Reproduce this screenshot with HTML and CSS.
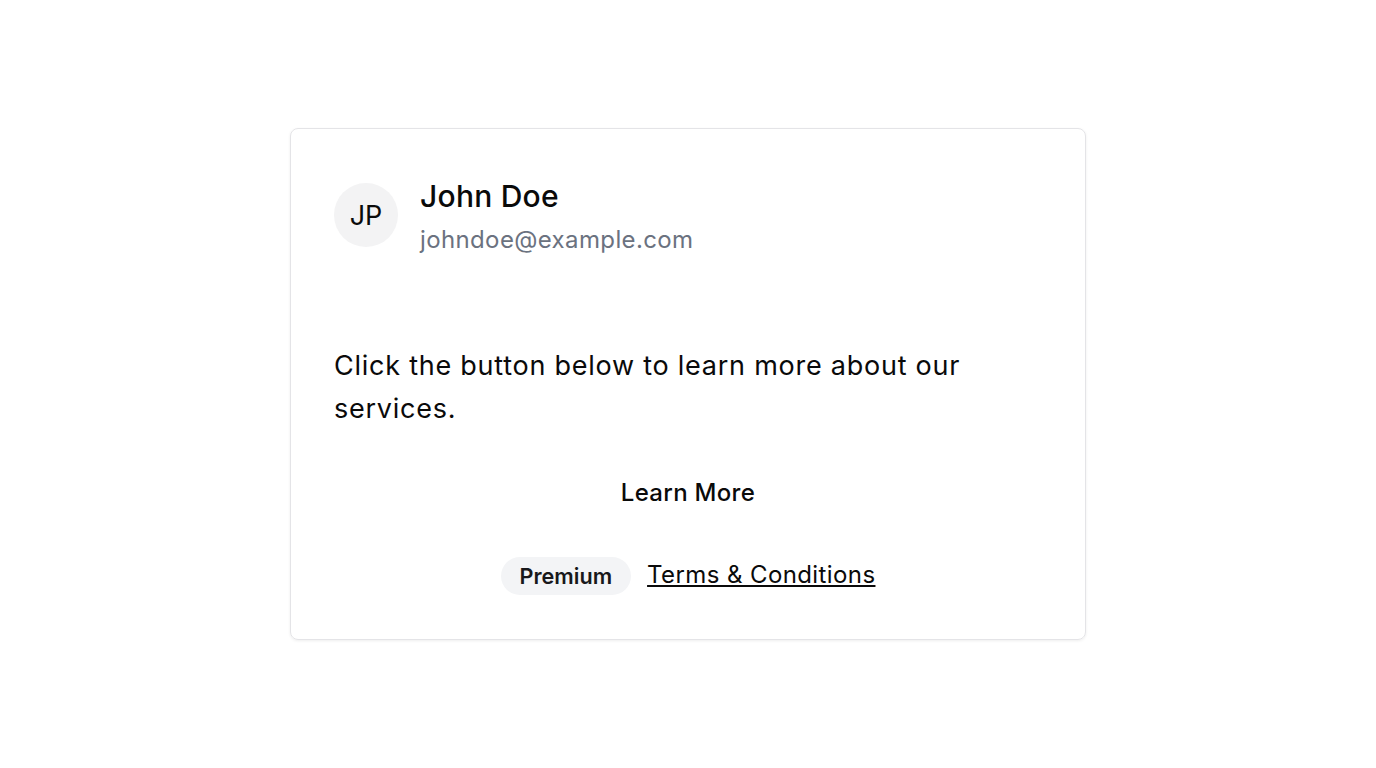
FILE: index.html
```html
<!DOCTYPE html>
<html lang="en">
<head>
<meta charset="utf-8">
<title>Profile Card</title>
<link rel="stylesheet" href="styles.css">
</head>
<body>
<main class="page">
  <section class="card">
    <header class="card-header">
      <div class="avatar">JP</div>
      <div class="identity">
        <h2 class="name">John Doe</h2>
        <p class="email">johndoe@example.com</p>
      </div>
    </header>
    <div class="card-body">
      <p class="lead">Click the button below to learn more about our services.</p>
    </div>
    <div class="card-actions">
      <button class="btn-ghost" type="button">Learn More</button>
    </div>
    <footer class="card-footer">
      <span class="badge">Premium</span>
      <a class="link" href="#">Terms &amp; Conditions</a>
    </footer>
  </section>
</main>
</body>
</html>
```

FILE: styles.css
```css
* { box-sizing: border-box; }
html, body { margin: 0; padding: 0; }
body {
  font-family: Inter, "Noto Sans", sans-serif;
  color: #0a0a0a;
  background: #ffffff;
}
.page {
  min-height: 768px;
  display: flex;
  align-items: center;
  justify-content: center;
}
.card {
  width: 796px;
  height: 512px;
  border: 1px solid #e4e4e7;
  border-radius: 8px;
  box-shadow: 0 1px 3px rgba(0,0,0,0.07);
  padding: 43px 43px 44px 43px;
  display: flex;
  flex-direction: column;
}
.card-header {
  display: flex;
  align-items: flex-start;
  gap: 22px;
  padding-top: 6px;
}
.avatar {
  flex: none;
  width: 64px;
  height: 64px;
  margin-top: 5px;
  border-radius: 50%;
  background: #f3f3f4;
  display: flex;
  align-items: center;
  justify-content: center;
  font-size: 27px;
  color: #0a0a0a;
}
.identity { display: flex; flex-direction: column; }
.name {
  margin: 0;
  font-size: 30px;
  font-weight: 500;
  line-height: 36px;
  letter-spacing: 0.25px;
}
.email {
  margin: 10px 0 0;
  font-size: 24px;
  line-height: 32px;
  letter-spacing: 0.37px;
  color: #6b7280;
}
.card-body {
  padding-top: 88px;
}
.lead {
  margin: 0;
  font-size: 27px;
  line-height: 43px;
  letter-spacing: 0.75px;
}
.card-actions {
  display: flex;
  justify-content: center;
  margin-top: 40px;
}
.btn-ghost {
  font-family: inherit;
  font-size: 24px;
  font-weight: 500;
  letter-spacing: 0.3px;
  color: #0a0a0a;
  background: transparent;
  border: 0;
  padding: 8px 16px;
}
.card-footer {
  margin-top: auto;
  display: flex;
  align-items: center;
  justify-content: center;
  gap: 16px;
}
.badge {
  display: inline-flex;
  align-items: center;
  height: 38px;
  padding: 0 19px 1px;
  border-radius: 999px;
  background: #f3f4f6;
  font-size: 21.6px;
  font-weight: 600;
  color: #18181b;
}
.link {
  margin-bottom: 4px;
  font-size: 24px;
  letter-spacing: 0.4px;
  color: #0a0a0a;
  text-decoration: underline;
}
```
